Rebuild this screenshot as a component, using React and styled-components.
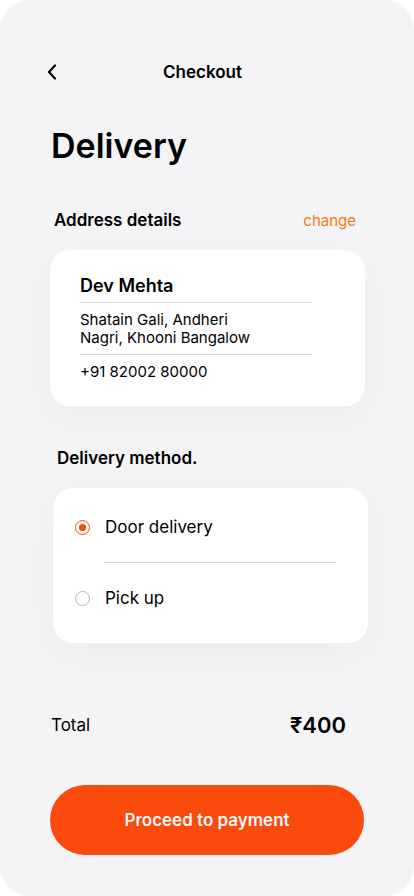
import React from 'react'
import styled, { createGlobalStyle } from 'styled-components'

const GlobalStyle = createGlobalStyle`
    body {
        margin: 0;
        background: #ffffff;
        font-family: Inter, 'Noto Sans', sans-serif;
        color: #000;
    }
    * { box-sizing: border-box; }
`

function App() {
    return (
        <>
            <GlobalStyle />
            <Screen>
                <Header>
                    <BackButton aria-label="back">
                        <svg width="10" height="16" viewBox="0 0 10 16" fill="none">
                            <polyline points="8,1.5 2,8 8,14.5" stroke="#000" strokeWidth="2.2" strokeLinecap="round" strokeLinejoin="round" />
                        </svg>
                    </BackButton>
                    <HeaderTitle>Checkout</HeaderTitle>
                    <span />
                </Header>

                <PageTitle>Delivery</PageTitle>

                <SectionRow $left={54} $top={44}>
                    <SectionTitle>Address details</SectionTitle>
                    <ChangeLink>change</ChangeLink>
                </SectionRow>

                <AddressCard>
                    <Name>Dev Mehta</Name>
                    <Divider />
                    <AddressText>Shatain Gali, Andheri<br />Nagri, Khooni Bangalow</AddressText>
                    <Divider />
                    <AddressText>+91 82002 80000</AddressText>
                </AddressCard>

                <SectionRow $left={57} $top={42}>
                    <SectionTitle>Delivery method.</SectionTitle>
                </SectionRow>

                <MethodCard>
                    <MethodRow>
                        <Radio $checked />
                        <MethodLabel>Door delivery</MethodLabel>
                    </MethodRow>
                    <MethodDivider />
                    <MethodRow>
                        <Radio />
                        <MethodLabel>Pick up</MethodLabel>
                    </MethodRow>
                </MethodCard>

                <TotalRow>
                    <TotalLabel>Total</TotalLabel>
                    <TotalPrice>₹400</TotalPrice>
                </TotalRow>

                <PayButton>Proceed to payment</PayButton>
            </Screen>
        </>
    )
}

export default App

const Screen = styled.div`
    width: 414px;
    height: 896px;
    background: #f4f4f6;
    border-radius: 30px;
    padding-top: 60px;
    display: flex;
    flex-direction: column;
    overflow: hidden;
`
const Header = styled.div`
    display: grid;
    grid-template-columns: 1fr auto 1fr;
    align-items: center;
    height: 24px;
    padding: 0 56px 0 47px;
`
const BackButton = styled.button`
    border: none;
    background: none;
    padding: 0;
    width: 14px;
    height: 24px;
    display: flex;
    align-items: center;
    justify-content: flex-start;
`
const HeaderTitle = styled.div`
    font-size: 17px;
    font-weight: 600;
    line-height: 24px;
`
const PageTitle = styled.h1`
    margin: 41px 0 0 51px;
    font-size: 34px;
    font-weight: 600;
    line-height: 41px;
`
const SectionRow = styled.div`
    display: flex;
    justify-content: space-between;
    align-items: center;
    margin-top: ${p => p.$top}px;
    padding: 0 58px 0 ${p => p.$left}px;
`
const SectionTitle = styled.div`
    font-size: 17px;
    font-weight: 600;
    line-height: 21px;
`
const ChangeLink = styled.div`
    font-size: 15px;
    line-height: 21px;
    color: #f47b0a;
`
const AddressCard = styled.div`
    margin: 19px 0 0 50px;
    width: 315px;
    height: 156px;
    background: #fff;
    border-radius: 20px;
    padding: 25px 53px 0 30px;
    box-shadow: 0 10px 40px rgba(0, 0, 0, 0.03);
`
const Name = styled.div`
    font-size: 18px;
    font-weight: 600;
    line-height: 22px;
`
const Divider = styled.div`
    height: 1px;
    background: #d9d9d9;
    margin: 5px 0 8px;
`
const AddressText = styled.div`
    font-size: 15px;
    line-height: 18px;
    margin-bottom: 7px;
`
const MethodCard = styled.div`
    margin: 19px 0 0 53px;
    width: 315px;
    height: 155px;
    background: #fff;
    border-radius: 20px;
    padding: 20px 32px 0 22px;
    box-shadow: 0 10px 40px rgba(0, 0, 0, 0.03);
`
const MethodRow = styled.div`
    display: flex;
    align-items: center;
    height: 38px;
    gap: 15px;
`
const Radio = styled.span`
    width: 15px;
    height: 15px;
    border-radius: 50%;
    border: 1px solid ${p => (p.$checked ? '#fa4a0c' : '#b3b3b3')};
    display: flex;
    align-items: center;
    justify-content: center;
    &::after {
        content: '';
        width: 7px;
        height: 7px;
        border-radius: 50%;
        background: ${p => (p.$checked ? '#fa4a0c' : 'transparent')};
    }
`
const MethodLabel = styled.div`
    font-size: 17px;
    line-height: 21px;
`
const MethodDivider = styled.div`
    height: 1px;
    background: #d9d9d9;
    margin: 16px 0 16px 29px;
`
const TotalRow = styled.div`
    display: flex;
    justify-content: space-between;
    align-items: center;
    margin-top: 70px;
    padding: 0 68px 0 51px;
`
const TotalLabel = styled.div`
    font-size: 17px;
    line-height: 24px;
`
const TotalPrice = styled.div`
    font-size: 22px;
    font-weight: 600;
    line-height: 24px;
`
const PayButton = styled.button`
    margin: 48px 0 0 50px;
    width: 314px;
    height: 70px;
    border: none;
    border-radius: 35px;
    background: #fa4a0c;
    color: #f6f6f9;
    font-family: Inter, 'Noto Sans', sans-serif;
    font-size: 17px;
    font-weight: 600;
`
